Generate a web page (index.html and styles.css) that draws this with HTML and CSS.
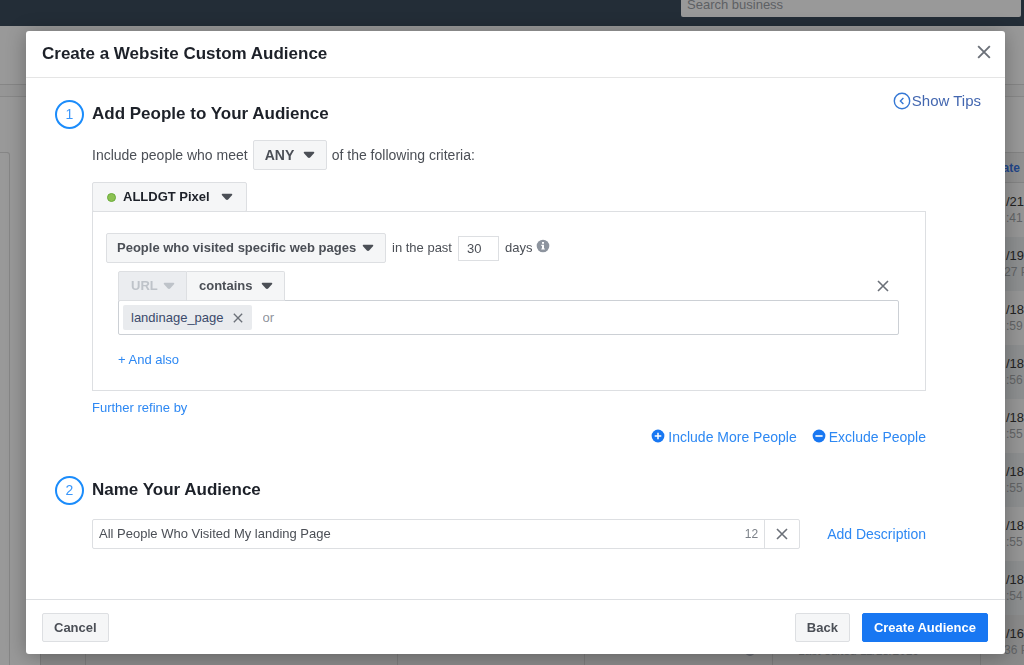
FILE: index.html
```html
<!DOCTYPE html>
<html lang="en">
<head>
<meta charset="utf-8">
<meta name="viewport" content="width=device-width, initial-scale=1">
<title>Create a Website Custom Audience</title>
<link rel="stylesheet" href="styles.css">
</head>
<body>
<svg class="defs" aria-hidden="true">
  <symbol id="caret" viewBox="0 0 12 8"><path d="M1.6 0.8h8.8q1.2 0 .8 1.2L7.4 6.3Q6 7.7 4.6 6.3L.8 2Q.4 .8 1.6 .8z" fill="currentColor"/></symbol>
  <symbol id="cross" viewBox="0 0 12 12"><path d="M1 1l10 10M11 1L1 11" fill="none" stroke="currentColor" stroke-width="1.6"/></symbol>
</svg>

<div class="page" aria-hidden="true">
  <div class="topbar"><div class="search">Search business</div></div>
  <div class="toolbar"></div>
  <div class="band"></div>
  <div class="workspace">
    <div class="sidebar"></div>
    <table class="audiences">
      <colgroup><col class="c-check"><col class="c-name"><col class="c-type"><col class="c-avail"><col class="c-status"><col></colgroup>
      <thead><tr><th></th><th></th><th></th><th></th><th></th><th>ate</th></tr></thead>
      <tbody>
        <tr><td></td><td></td><td></td><td></td><td></td><td>/21<small>:41</small></td></tr>
        <tr><td></td><td></td><td></td><td></td><td></td><td>/19<small class="out">27 P</small></td></tr>
        <tr><td></td><td></td><td></td><td></td><td></td><td>/18<small>:59</small></td></tr>
        <tr><td></td><td></td><td></td><td></td><td></td><td>/18<small>:56</small></td></tr>
        <tr><td></td><td></td><td></td><td></td><td></td><td>/18<small>:55</small></td></tr>
        <tr><td></td><td></td><td></td><td></td><td></td><td>/18<small>:55</small></td></tr>
        <tr><td></td><td></td><td></td><td></td><td></td><td>/18<small>:55</small></td></tr>
        <tr><td></td><td></td><td></td><td></td><td></td><td>/18<small>:54</small></td></tr>
        <tr class="last"><td></td><td></td><td></td><td class="avail"><span class="blob"></span></td><td class="edited"><small>Last edited 11/18/2019</small></td><td>/16<small class="out">36 P</small></td></tr>
      </tbody>
    </table>
  </div>
</div>

<div class="overlay">
<form class="modal" role="dialog" aria-labelledby="dialog-title">
  <header class="modal-head">
    <h1 id="dialog-title">Create a Website Custom Audience</h1>
    <button type="button" class="icon-btn" aria-label="Close"><svg class="x-lg"><use href="#cross"/></svg></button>
  </header>

  <main class="modal-body">
    <section>
      <div class="step-head">
        <span class="step-no">1</span>
        <h2>Add People to Your Audience</h2>
        <a class="tips" href="#tips"><svg viewBox="0 0 18 18"><circle cx="9" cy="9" r="7.7" fill="none" stroke="currentColor" stroke-width="1.4"/><path d="M10.4 6L7.4 9l3 3" fill="none" stroke="currentColor" stroke-width="1.4"/></svg>Show Tips</a>
      </div>
      <div class="step-content">
        <div class="meet">
          <label for="match">Include people who meet</label>
          <span class="picker any"><select id="match"><option>ANY</option></select><svg><use href="#caret"/></svg></span>
          <span>of the following criteria:</span>
        </div>
        <span class="picker pixel"><i class="dot"></i><select aria-label="Pixel"><option>ALLDGT Pixel</option></select><svg><use href="#caret"/></svg></span>
        <div class="rules">
          <div class="rule">
            <span class="picker"><select aria-label="Event"><option>People who visited specific web pages</option></select><svg><use href="#caret"/></svg></span>
            <label for="days">in the past</label>
            <input id="days" class="days" type="text" value="30">
            <span class="unit">days <svg viewBox="0 0 14 14"><circle cx="7" cy="7" r="6.3" fill="#8d949e"/><path d="M6 2.9h2v1.8H6zM5.3 5.8H8v3.7h.8v1.1H5.3V9.5H6V6.9h-.7z" fill="#fff"/></svg></span>
          </div>
          <div class="url-rule">
            <div class="tabs">
              <span class="picker field"><select aria-label="Field" disabled><option>URL</option></select><svg><use href="#caret"/></svg></span>
              <span class="picker operator"><select aria-label="Operator"><option>contains</option></select><svg><use href="#caret"/></svg></span>
              <button type="button" class="icon-btn remove" aria-label="Remove rule"><svg class="x-md"><use href="#cross"/></svg></button>
            </div>
            <div class="tokens">
              <span class="token">landinage_page<button type="button" class="icon-btn" aria-label="Remove landinage_page"><svg class="x-sm"><use href="#cross"/></svg></button></span>
              <input type="text" placeholder="or" aria-label="Add a keyword">
            </div>
            <a class="also" href="#also">+ And also</a>
          </div>
        </div>
        <a class="refine" href="#refine">Further refine by</a>
        <div class="people">
          <a href="#include"><svg viewBox="0 0 14 14"><circle cx="7" cy="7" r="6.4" fill="#1877f2"/><path d="M7 3.7v6.6M3.7 7h6.6" stroke="#fff" stroke-width="1.5"/></svg>Include More People</a>
          <a href="#exclude"><svg viewBox="0 0 14 14"><circle cx="7" cy="7" r="6.4" fill="#1877f2"/><path d="M3.4 7h7.2" stroke="#fff" stroke-width="1.6"/></svg>Exclude People</a>
        </div>
      </div>
    </section>

    <section class="second">
      <div class="step-head">
        <span class="step-no">2</span>
        <h2>Name Your Audience</h2>
      </div>
      <div class="step-content name-row">
        <div class="name-box">
          <input type="text" value="All People Who Visited My landing Page" aria-label="Audience name">
          <span class="count">12</span>
          <button type="button" class="icon-btn clear" aria-label="Clear name"><svg class="x-md"><use href="#cross"/></svg></button>
        </div>
        <a href="#description">Add Description</a>
      </div>
    </section>
  </main>

  <footer class="modal-foot">
    <button type="button" class="btn">Cancel</button>
    <button type="button" class="btn back">Back</button>
    <button type="submit" class="btn primary">Create Audience</button>
  </footer>
</form>
</div>
</body>
</html>
```
FILE: styles.css
```css
* { box-sizing: border-box; }
body {
  margin: 0;
  height: 100vh;
  overflow: hidden;
  background: #999;
  color: #4b4f56;
  font: 13px/18px "Liberation Sans", Arial, sans-serif;
}
h1, h2 { margin: 0; color: #1d2129; font-size: 17px; font-weight: bold; line-height: 22px; }
a { color: #2d88f3; text-decoration: none; }
button, input, select { font: inherit; color: inherit; }
svg { display: block; flex: none; }
.defs { position: absolute; width: 0; height: 0; }

/* Page behind the dialog */
.page { height: 100vh; overflow: hidden; }
.topbar { display: flex; justify-content: flex-end; height: 26px; padding-right: 3px; background: #232d37; }
.search { width: 340px; height: 17px; padding-left: 6px; border-radius: 0 0 2px 2px; background: #999; color: #5d6064; line-height: 9px; }
.toolbar { height: 59px; border-bottom: 1px solid #868686; }
.band { height: 12px; margin-bottom: 55px; border-bottom: 1px solid #888; background: #969696; }
.workspace { display: flex; align-items: flex-start; gap: 30px; }
.sidebar { flex: none; width: 10px; height: 600px; border: 1px solid #868686; border-left: 0; border-radius: 0 3px 0 0; }
.audiences { flex: 1; min-width: 0; width: 100%; table-layout: fixed; border-collapse: collapse; }
.c-check { width: 45px; }
.c-name { width: 312px; }
.c-type { width: 187px; }
.c-avail { width: 188px; }
.c-status { width: 208px; }
.audiences th { height: 30px; padding: 0 0 0 22px; border: solid #848484; border-width: 1px 0; background: #919191; color: #23478a; font-size: 12px; text-align: left; }
.audiences td { height: 54px; padding: 0 0 0 25px; border-left: 1px solid #7c7c7c; background: #969696; color: #222; line-height: 17px; white-space: nowrap; }
.audiences tr:nth-child(even) td { background: #8d8f90; }
.audiences small { display: block; color: #626466; font-size: 12px; line-height: 16px; }
.audiences .out { margin-left: -2px; }
.audiences .last td { background: #8a8a8a; }
.audiences .edited, .audiences .avail { padding-top: 18px; }
.audiences .avail { padding-left: 160px; }
.blob { display: block; width: 10px; height: 10px; border-radius: 5px; background: #65696f; }

/* Dialog */
.overlay { position: fixed; inset: 0; padding: 31px 19px 11px 26px; overflow: auto; }
.modal { border-radius: 3px; background: #fff; box-shadow: 0 2px 20px rgba(0, 0, 0, .3); }
.modal-head { display: flex; align-items: center; justify-content: space-between; padding: 12px 14px 12px 16px; border-bottom: 1px solid #e5e5e5; }
.modal-head .icon-btn { margin-bottom: 4px; }
.icon-btn { display: flex; padding: 0; border: 0; background: none; color: #6b7078; }
.x-lg { width: 14px; height: 14px; }
.x-md { width: 12px; height: 12px; }
.x-sm { width: 10px; height: 10px; }
.modal-body { padding: 14px 24px 50px 29px; }
.step-head { display: flex; align-items: flex-start; gap: 8px; }
.step-no { width: 29px; height: 29px; margin-top: 8px; border: 2px solid #1b8cfb; border-radius: 50%; color: #3b97fb; font-size: 14px; line-height: 25px; text-align: center; }
.step-head h2 { margin-top: 11px; }
.tips { display: flex; gap: 1px; margin-left: auto; color: #4367b0; font-size: 15px; }
.tips svg { width: 18px; height: 18px; color: #3578d5; }
.step-content { margin: 11px 55px 0 37px; }

.picker { display: inline-grid; grid-template-columns: 1fr auto; align-items: center; border: 1px solid #dddfe2; border-radius: 2px; background: #f5f6f7; color: #4b4f56; font-weight: bold; }
.picker select { grid-area: 1 / 1 / 2 / 3; height: 28px; padding: 0 28px 0 10px; border: 0; background: none; appearance: none; opacity: 1; }
.picker svg { grid-area: 1 / 2; width: 12px; height: 8px; margin-right: 11px; pointer-events: none; }
.meet { display: flex; align-items: center; gap: 5px; margin-bottom: 12px; font-size: 14px; }
.meet .picker select { padding: 0 31px 0 11px; }
.pixel { display: grid; grid-template-columns: auto 1fr auto; width: max-content; color: #1d2129; }
.pixel select { grid-area: 1 / 2 / 2 / 4; padding: 0 36px 0 7px; }
.pixel svg { grid-area: 1 / 3; margin-right: 13px; color: #4b4f56; }
.dot { width: 9px; height: 9px; margin-left: 14px; border: 1px solid #6aac3a; border-radius: 50%; background: #8cc152; }
.rules { margin-top: -1px; padding: 21px 26px 21px 13px; border: 1px solid #dddfe2; }
.rule { display: flex; align-items: center; gap: 6px; }
.days { width: 41px; height: 25px; padding: 0 8px; border: 1px solid #dddfe2; background: #fff; }
.unit { display: flex; gap: 4px; }
.unit svg { width: 14px; height: 14px; }
.url-rule { margin: 8px 0 0 12px; }
.tabs { display: flex; align-items: center; }
.field { border-radius: 2px 0 0 0; background: #ebedf0; color: #bec3c9; }
.field select { padding-left: 12px; }
.operator { border-left: 0; border-radius: 0 2px 0 0; }
.operator select { padding: 0 31px 0 12px; }
.remove { margin-left: auto; margin-right: 10px; }
.tokens { display: flex; align-items: center; gap: 11px; height: 35px; margin-top: -1px; padding: 4px; border: 1px solid #ccd0d5; border-radius: 2px; background: #fff; }
.token { display: flex; align-items: center; gap: 9px; height: 25px; padding: 0 9px 0 8px; border-radius: 2px; background: #e9ebee; color: #3b4a6b; }
.tokens input { flex: 1; min-width: 0; padding: 0; border: 0; }
.tokens input::placeholder { color: #90949c; opacity: 1; }
.also { display: block; width: max-content; margin-top: 16px; }
.refine { display: block; width: max-content; margin-top: 8px; }
.people { display: flex; justify-content: flex-end; gap: 15px; margin-top: 11px; font-size: 14px; }
.people a { display: flex; gap: 3px; }
.people svg { width: 14px; height: 14px; margin-top: 1px; }
.second { margin-top: 22px; }
.name-row { display: flex; align-items: center; gap: 27px; margin-top: 14px; font-size: 14px; }
.name-box { display: flex; flex: 1; align-items: center; height: 30px; border: 1px solid #dddfe2; border-radius: 2px; font-size: 13px; }
.name-box input { flex: 1; min-width: 0; padding: 0 6px; border: 0; }
.count { padding-right: 6px; color: #7b8088; font-size: 12px; }
.clear { align-items: center; justify-content: center; width: 35px; height: 28px; border-left: 1px solid #dddfe2; }

.modal-foot { display: flex; gap: 12px; padding: 13px 17px 12px 16px; border-top: 1px solid #dddfe2; }
.btn { height: 29px; padding: 0 11px; border: 1px solid #dddfe2; border-radius: 2px; background: #f5f6f7; color: #4b4f56; line-height: 16px; font-weight: bold; }
.back { margin-left: auto; }
.primary { border-color: #1877f2; background: #1877f2; color: #fff; }
```
